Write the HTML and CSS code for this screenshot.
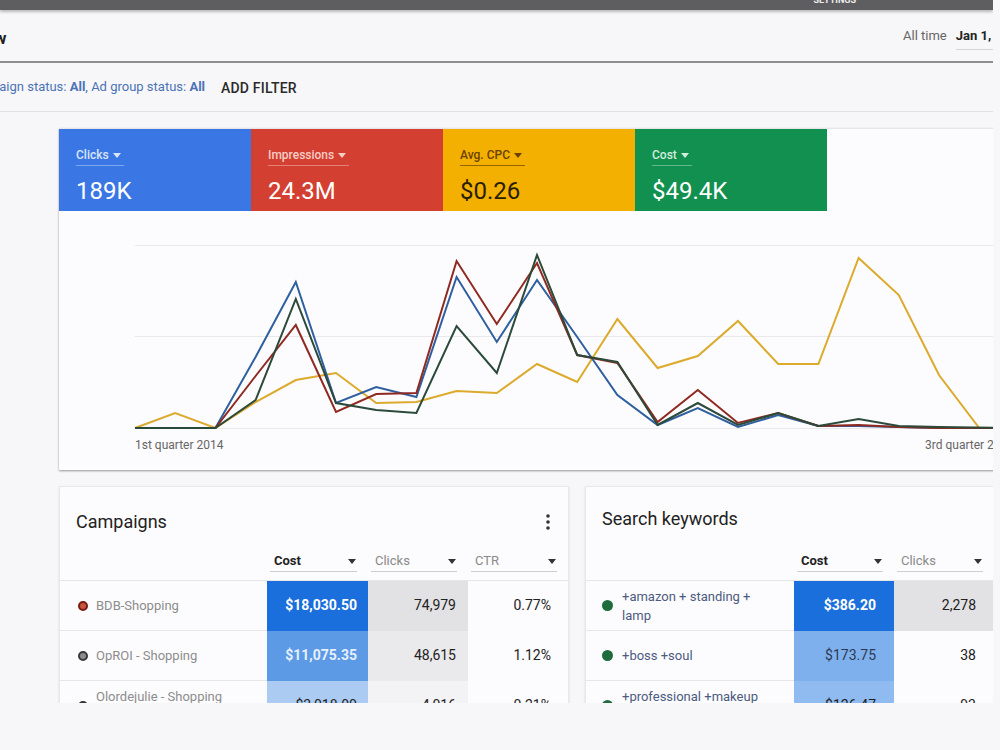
FILE: index.html
```html
<!DOCTYPE html>
<html lang="en">

<head>
    <meta charset="UTF-8">
    <title>Overview</title>
    <link rel="stylesheet" href="styles.css">
</head>

<body>
    <div class="page">
        <div class="topbar"><span class="topbar__link">SETTINGS</span></div>

        <div class="head">
            <h1 class="head__title">Overview</h1>
            <div class="range">
                <span class="range__label">All time</span>
                <span class="range__date">Jan 1, 2014 – Sep 30, 2014</span>
            </div>
        </div>

        <div class="filters">
            <span class="filters__text">Campaign status: <b>All</b>, Ad group status: <b>All</b></span>
            <button class="filters__add" type="button">ADD FILTER</button>
        </div>

        <section class="overview">
            <div class="tiles">
                <div class="tile tile--blue">
                    <span class="tile__label">Clicks <i class="caret"></i></span>
                    <div class="tile__value">189K</div>
                </div>
                <div class="tile tile--red">
                    <span class="tile__label">Impressions <i class="caret"></i></span>
                    <div class="tile__value">24.3M</div>
                </div>
                <div class="tile tile--yellow">
                    <span class="tile__label">Avg. CPC <i class="caret"></i></span>
                    <div class="tile__value">$0.26</div>
                </div>
                <div class="tile tile--green">
                    <span class="tile__label">Cost <i class="caret"></i></span>
                    <div class="tile__value">$49.4K</div>
                </div>
            </div>

            <svg class="chart" viewBox="0 0 945 259" width="945" height="259">
                <g stroke="#e9e8ea" stroke-width="1">
                    <line x1="76" y1="34.5" x2="945" y2="34.5" />
                    <line x1="76" y1="125.5" x2="945" y2="125.5" />
                    <line x1="76" y1="217.5" x2="945" y2="217.5" />
                </g>
                <g fill="none" stroke-width="2" stroke-linejoin="miter">
                    <polyline stroke="#dcaa2c"
                        points="76,217 116.2,202 156.4,217 196.6,191 236.8,169 277,162 317.2,192 357.4,191 397.6,180 437.8,182 478,153 518.2,171 558.4,108 598.6,157 638.8,145 679,110 719.2,153 759.4,153 799.6,47 839.8,84 880,164 920.2,217 945,217" />
                    <polyline stroke="#2e5f9f"
                        points="76,217 116.2,217 156.4,217 196.6,146 236.8,71 277,192 317.2,176 357.4,186 397.6,66 437.8,131 478,69 518.2,126 558.4,184 598.6,214 638.8,197 679,216 719.2,204 759.4,215 799.6,215 839.8,216 880,217 945,217" />
                    <polyline stroke="#8f2a22"
                        points="76,217 116.2,217 156.4,217 196.6,165 236.8,114 277,201 317.2,183 357.4,182 397.6,50 437.8,113 478,52 518.2,144 558.4,152 598.6,211 638.8,179 679,212 719.2,202 759.4,215 799.6,214 839.8,216 880,217 945,217" />
                    <polyline stroke="#2b4a3a"
                        points="76,217 116.2,217 156.4,217 196.6,189 236.8,88 277,192 317.2,199 357.4,202 397.6,115 437.8,162 478,44 518.2,144 558.4,151 598.6,214 638.8,192 679,214 719.2,202 759.4,215 799.6,208 839.8,215 880,216 945,217" />
                </g>
                <g class="chart__axis">
                    <text x="76" y="238">1st quarter 2014</text>
                    <text x="866" y="238">3rd quarter 2014</text>
                </g>
            </svg>
        </section>

        <div class="panels">
            <section class="panel panel--campaigns">
                <div class="panel__head">
                    <h2 class="panel__title">Campaigns</h2>
                    <svg class="kebab" viewBox="0 0 4 16" width="4" height="16">
                        <circle cx="2" cy="2" r="1.8" />
                        <circle cx="2" cy="8" r="1.8" />
                        <circle cx="2" cy="14" r="1.8" />
                    </svg>
                </div>
                <div class="table">
                    <div class="table__row table__row--head">
                        <span></span>
                        <span class="th th--active">Cost <i class="caret"></i></span>
                        <span class="th">Clicks <i class="caret"></i></span>
                        <span class="th">CTR <i class="caret"></i></span>
                    </div>
                    <div class="table__row">
                        <span class="td-name"><i class="dot dot--red"></i>BDB-Shopping</span>
                        <span class="td td--cost-1">$18,030.50</span>
                        <span class="td td--clicks-1">74,979</span>
                        <span class="td td--ctr">0.77%</span>
                    </div>
                    <div class="table__row">
                        <span class="td-name"><i class="dot dot--grey"></i>OpROI - Shopping</span>
                        <span class="td td--cost-2">$11,075.35</span>
                        <span class="td td--clicks-2">48,615</span>
                        <span class="td td--ctr">1.12%</span>
                    </div>
                    <div class="table__row">
                        <span class="td-name"><i class="dot dot--dark"></i>Olordejulie - Shopping Showcase</span>
                        <span class="td td--cost-3">$3,018.00</span>
                        <span class="td td--clicks-3">4,016</span>
                        <span class="td td--ctr">0.21%</span>
                    </div>
                </div>
            </section>

            <section class="panel panel--keywords">
                <div class="panel__head">
                    <h2 class="panel__title">Search keywords</h2>
                </div>
                <div class="table">
                    <div class="table__row table__row--head">
                        <span></span>
                        <span class="th th--active">Cost <i class="caret"></i></span>
                        <span class="th">Clicks <i class="caret"></i></span>
                        <span></span>
                    </div>
                    <div class="table__row">
                        <span class="td-name td-name--kw"><i class="dot dot--green"></i>+amazon + standing + lamp</span>
                        <span class="td td--cost-1">$386.20</span>
                        <span class="td td--clicks-1">2,278</span>
                        <span></span>
                    </div>
                    <div class="table__row">
                        <span class="td-name td-name--kw"><i class="dot dot--green"></i>+boss +soul</span>
                        <span class="td td--cost-kw2">$173.75</span>
                        <span class="td">38</span>
                        <span></span>
                    </div>
                    <div class="table__row">
                        <span class="td-name td-name--kw"><i class="dot dot--green"></i>+professional +makeup +brush</span>
                        <span class="td td--cost-kw3">$126.47</span>
                        <span class="td">93</span>
                        <span></span>
                    </div>
                </div>
            </section>
        </div>
    </div>
</body>

</html>
```

FILE: styles.css
```css
* {
    border: 0;
    box-sizing: border-box;
    margin: 0;
    padding: 0;
}

:root {
    --bg: #f7f6f8;
    --card: #fcfbfd;
    --fg: #222;
    --muted: #777;
    --link: #4b74b6;
}

body {
    background: var(--bg);
    color: var(--fg);
    font: 13px/1.4 Roboto, "Noto Sans", sans-serif;
}

.page {
    width: 993px;
    height: 703px;
    overflow: hidden;
}

/* Top bar */
.topbar {
    background: #5e5e60;
    box-shadow: 0 2px 3px rgba(0, 0, 0, 0.25);
    display: flex;
    justify-content: flex-end;
    height: 10px;
    overflow: hidden;
    padding-right: 137px;
    position: relative;
}

.topbar__link {
    color: #eee;
    font-size: 9px;
    font-weight: 700;
    line-height: 9px;
    margin-top: -4px;
}

/* Header */
.head {
    border-bottom: 2px solid #8e8e8e;
    display: flex;
    height: 53px;
}

.head__title {
    flex-shrink: 0;
    font-size: 17px;
    font-weight: 700;
    line-height: 20px;
    margin: 18px 0 0 -64px;
    width: 967px;
}

.range {
    display: flex;
    flex-shrink: 0;
    gap: 9px;
    margin-top: 17px;
    white-space: nowrap;
}

.range__label {
    color: #666;
}

.range__date {
    border-bottom: 1px solid #d6d6d6;
    font-weight: 700;
    height: 23px;
}

/* Filters */
.filters {
    align-items: center;
    border-bottom: 1px solid #e2e2e4;
    display: flex;
    height: 49px;
    padding-top: 1px;
}

.filters__text {
    color: var(--link);
    margin-left: -35px;
    white-space: nowrap;
}

.filters__add {
    background: transparent;
    color: #2a2a2a;
    font: 500 14px Roboto, "Noto Sans", sans-serif;
    letter-spacing: 0.2px;
    margin-left: 16px;
}

/* Overview card */
.overview {
    background: var(--card);
    border-top: 1px solid #e6e6e8;
    box-shadow: 0 1px 2px rgba(0, 0, 0, 0.4);
    margin: 16px 0 0 59px;
    width: 945px;
}

.tiles {
    display: flex;
}

.tile {
    color: #fff;
    height: 82px;
    padding: 17px 16px 0 17px;
    width: 192px;
}

.tile__label {
    align-items: center;
    border-bottom: 1px solid rgba(255, 255, 255, 0.35);
    display: inline-flex;
    font-size: 12px;
    font-weight: 500;
    gap: 4px;
    line-height: 14px;
    padding: 0 3px 3px 0;
}

.tile__value {
    font-size: 24px;
    line-height: 28px;
    margin-top: 11px;
}

.tile--blue {
    background: #3a77e4;
}

.tile--blue .tile__label {
    color: #d8e5fb;
}

.tile--red {
    background: #d33f31;
}

.tile--red .tile__label {
    color: #f7cdc6;
}

.tile--yellow {
    background: #f3b000;
    color: #2a1e00;
}

.tile--yellow .tile__label {
    border-bottom-color: rgba(80, 50, 0, 0.6);
    color: #6a4200;
}

.tile--green {
    background: #12904f;
}

.tile--green .tile__label {
    color: #d3ecdd;
}

.caret {
    border-left: 4px solid transparent;
    border-right: 4px solid transparent;
    border-top: 5px solid currentColor;
    display: inline-block;
}

.chart {
    display: block;
}

.chart__axis {
    fill: #666;
    font: 12px Roboto, "Noto Sans", sans-serif;
}

/* Panels */
.panels {
    display: flex;
    gap: 16px;
    margin: 16px 0 0 59px;
}

.panel {
    background: var(--card);
    border: 1px solid #e8e7ea;
    box-shadow: 0 1px 2px rgba(0, 0, 0, 0.12);
    flex-shrink: 0;
    height: 260px;
}

.panel--campaigns {
    width: 510px;
}

.panel--keywords {
    width: 420px;
}

.panel__head {
    align-items: center;
    display: flex;
    height: 56px;
    justify-content: space-between;
    padding: 14px 18px 0 16px;
}

.panel--keywords .panel__head {
    padding-top: 8px;
}

.panel__title {
    font-size: 18px;
    font-weight: 400;
    line-height: 22px;
}

.kebab {
    fill: #333;
}

.table__row {
    display: grid;
    grid-template-columns: 207px 101px 100px 1fr;
    height: 50px;
}

.panel--keywords .table__row {
    grid-template-columns: 208px 100px 100px 1fr;
}

.table__row--head {
    align-items: end;
    border-bottom: 1px solid #e6e6e8;
    height: 38px;
    padding-bottom: 8px;
}

.th {
    align-items: center;
    border-bottom: 1px solid #cfcfd2;
    color: #8a8a8a;
    display: flex;
    height: 20px;
    justify-content: space-between;
    margin: 0 11px 0 3px;
    padding: 0 1px 0 4px;
}

.th--active {
    color: var(--fg);
    font-weight: 700;
}

.th .caret {
    color: #333;
}

.td-name {
    align-items: center;
    border-bottom: 1px solid #e6e6e8;
    color: #8d8d8d;
    display: flex;
    gap: 8px;
    line-height: 19px;
    padding: 0 20px 0 18px;
}

.td-name--kw {
    color: #4c5b80;
    gap: 9px;
    padding-left: 16px;
}

.dot {
    border-radius: 50%;
    flex-shrink: 0;
    height: 10px;
    width: 10px;
}

.dot--red {
    background: #c9553e;
    border: 2px solid #761c10;
}

.dot--grey {
    background: #8c8c8c;
    border: 2px solid #393939;
}

.dot--dark {
    background: #333;
}

.dot--green {
    background: #1e6b3d;
    height: 11px;
    width: 11px;
}

.td {
    align-items: center;
    display: flex;
    font-size: 14px;
    justify-content: flex-end;
    padding-right: 12px;
}

.td--cost-1 {
    background: #1b6fdc;
    color: #fff;
    font-weight: 700;
    padding-right: 11px;
}

.td--cost-2 {
    background: #5c9ae6;
    color: #e6effc;
    font-weight: 700;
    padding-right: 11px;
}

.td--cost-3 {
    background: #abcbf2;
    padding-right: 11px;
}

.td--clicks-1 {
    background: #e2e1e4;
}

.td--clicks-2 {
    background: #eae9ec;
}

.td--clicks-3 {
    background: #f3f2f4;
}

.td--ctr {
    padding-right: 17px;
}

.panel--keywords .td {
    padding-right: 18px;
}

.td--cost-kw2 {
    background: #7eb0ee;
    color: #2d3b52;
}

.td--cost-kw3 {
    background: #8fbbf1;
}
```
